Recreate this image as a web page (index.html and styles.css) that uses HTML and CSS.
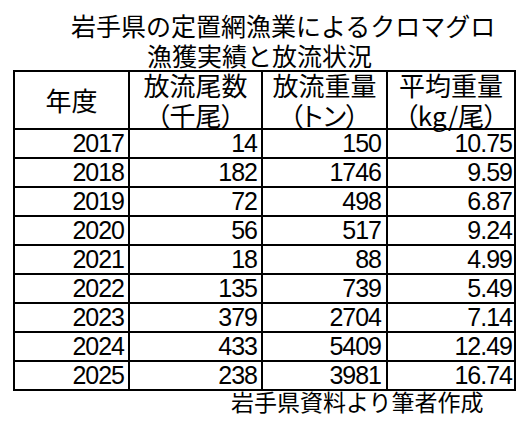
FILE: index.html
```html
<!DOCTYPE html>
<html lang="ja">
<head>
<meta charset="utf-8">
<title>岩手県の定置網漁業によるクロマグロ漁獲実績と放流状況</title>
<link rel="stylesheet" href="styles.css">
</head>
<body>
<div class="title">
  <div class="title-line1">岩手県の定置網漁業によるクロマグロ</div>
  <div class="title-line2">漁獲実績と放流状況</div>
</div>
<table class="data">
  <colgroup>
    <col class="c1"><col class="c2"><col class="c3"><col class="c4">
  </colgroup>
  <thead>
    <tr class="head">
      <th><span class="hd">年度</span></th>
      <th><span class="hd">放流尾数<br><span class="unit">（千尾）</span></span></th>
      <th><span class="hd">放流重量<br><span class="unit">（トン）</span></span></th>
      <th><span class="hd">平均重量<br><span class="unit">（kg/尾）</span></span></th>
    </tr>
  </thead>
  <tbody>
    <tr><td class="n1">2017</td><td class="n2">14</td><td class="n3">150</td><td class="n4">10.75</td></tr>
    <tr><td class="n1">2018</td><td class="n2">182</td><td class="n3">1746</td><td class="n4">9.59</td></tr>
    <tr><td class="n1">2019</td><td class="n2">72</td><td class="n3">498</td><td class="n4">6.87</td></tr>
    <tr><td class="n1">2020</td><td class="n2">56</td><td class="n3">517</td><td class="n4">9.24</td></tr>
    <tr><td class="n1">2021</td><td class="n2">18</td><td class="n3">88</td><td class="n4">4.99</td></tr>
    <tr><td class="n1">2022</td><td class="n2">135</td><td class="n3">739</td><td class="n4">5.49</td></tr>
    <tr><td class="n1">2023</td><td class="n2">379</td><td class="n3">2704</td><td class="n4">7.14</td></tr>
    <tr><td class="n1">2024</td><td class="n2">433</td><td class="n3">5409</td><td class="n4">12.49</td></tr>
    <tr><td class="n1">2025</td><td class="n2">238</td><td class="n3">3981</td><td class="n4">16.74</td></tr>
  </tbody>
</table>
<div class="source">岩手県資料より筆者作成</div>
</body>
</html>
```

FILE: styles.css
```css
html, body {
  margin: 0;
  padding: 0;
  background: #ffffff;
  color: #000000;
}

body {
  width: 530px;
  height: 427px;
  overflow: hidden;
  font-family: "Noto Sans CJK JP", "Liberation Sans", sans-serif;
}

.title {
  padding-top: 10px;
  font-size: 25px;
  line-height: 30px;
  white-space: nowrap;
}

.title-line1 {
  padding-left: 71px;
}

.title-line2 {
  padding-left: 147px;
}

.data {
  margin-left: 13px;
  border-collapse: separate;
  border-spacing: 0;
  table-layout: fixed;
  width: 503px;
  box-sizing: border-box;
  border-top: 2px solid #000;
  border-left: 2px solid #000;
}

.c1 { width: 115px; }
.c2 { width: 133px; }
.c3 { width: 125px; }
.c4 { width: 128px; }

.data th,
.data td {
  border-right: 2px solid #000;
  border-bottom: 2px solid #000;
  padding: 0;
  box-sizing: border-box;
  white-space: nowrap;
}

.head {
  height: 58px;
}

.data th {
  font-weight: normal;
  font-size: 26px;
  text-align: center;
  vertical-align: middle;
}

.hd {
  display: block;
  line-height: 30px;
  margin: -2px 0;
}

.unit {
  font-feature-settings: "palt" 1;
}

.data tbody tr {
  height: 29px;
}

.data td {
  font-family: "Liberation Sans", "Noto Sans", sans-serif;
  font-size: 25px;
  letter-spacing: -1px;
  line-height: 27px;
  text-align: right;
  vertical-align: middle;
}

.data td.n1 { padding-right: 4px; }
.data td.n2 { padding-right: 4px; }
.data td.n3 { padding-right: 5px; }
.data td.n4 { padding-right: 2px; }

.source {
  padding-left: 231px;
  margin-top: -1px;
  font-size: 23px;
  line-height: 23px;
  white-space: nowrap;
}
```
